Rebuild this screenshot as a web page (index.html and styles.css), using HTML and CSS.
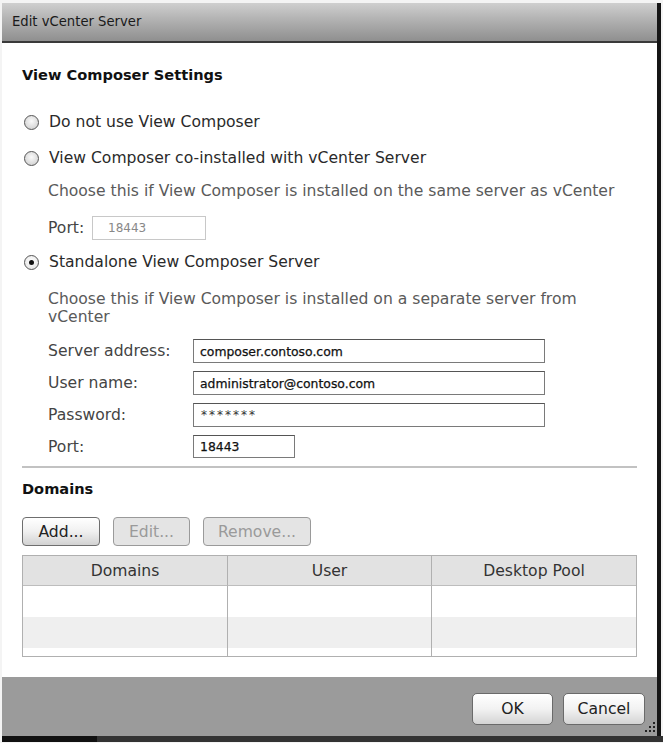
FILE: index.html
```html
<!DOCTYPE html>
<html>
<head>
<meta charset="utf-8">
<link rel="stylesheet" href="styles.css">
</head>
<body>
<div class="dialog">
  <div class="titlebar">Edit vCenter Server</div>
  <div class="content">
    <h2 class="heading first">View Composer Settings</h2>
    <div class="radio-row r1"><span class="radio"></span><span>Do not use View Composer</span></div>
    <div class="radio-row r2"><span class="radio"></span><span>View Composer co-installed with vCenter Server</span></div>
    <div class="desc d1">Choose this if View Composer is installed on the same server as vCenter</div>
    <div class="port-row"><span class="label short">Port:</span><span class="input disabled">18443</span></div>
    <div class="radio-row r3"><span class="radio checked"></span><span>Standalone View Composer Server</span></div>
    <div class="desc d2">Choose this if View Composer is installed on a separate server from vCenter</div>
    <div class="form">
      <div class="form-row"><span class="label">Server address:</span><span class="input wide">composer.contoso.com</span></div>
      <div class="form-row"><span class="label">User name:</span><span class="input wide">administrator@contoso.com</span></div>
      <div class="form-row"><span class="label">Password:</span><span class="input wide pw">*******</span></div>
      <div class="form-row"><span class="label">Port:</span><span class="input port">18443</span></div>
    </div>
    <div class="separator"></div>
    <h2 class="heading domains">Domains</h2>
    <div class="toolbar">
      <button class="btn add">Add...</button>
      <button class="btn dis edit">Edit...</button>
      <button class="btn dis remove">Remove...</button>
    </div>
    <div class="table">
      <div class="th">Domains</div><div class="th">User</div><div class="th last">Desktop Pool</div>
      <div class="td"></div><div class="td"></div><div class="td last"></div>
      <div class="td alt"></div><div class="td alt"></div><div class="td alt last"></div>
      <div class="td tail"></div><div class="td tail"></div><div class="td tail last"></div>
    </div>
  </div>
  <div class="footer">
    <button class="fbtn ok">OK</button>
    <button class="fbtn cancel">Cancel</button>
    <svg class="grip" width="12" height="12" viewBox="0 0 12 12"><rect x="9" y="1" width="2" height="2" fill="#222"/><rect x="5" y="5" width="2" height="2" fill="#222"/><rect x="9" y="5" width="2" height="2" fill="#222"/><rect x="1" y="9" width="2" height="2" fill="#222"/><rect x="5" y="9" width="2" height="2" fill="#222"/><rect x="9" y="9" width="2" height="2" fill="#222"/></svg>
  </div>
</div>
<div class="bottom-strip"><div class="bs-left"></div><div class="bs-right"></div></div>
</body>
</html>
```
FILE: styles.css
```css
html, body {
  margin: 0;
  padding: 0;
  background: #f4f4f4;
}
body {
  font-family: "DejaVu Sans", Verdana, sans-serif;
  color: #222;
  width: 663px;
  height: 743px;
  overflow: hidden;
}
.dialog {
  width: 655px;
  margin: 3px 0 0 2px;
  border-right: 4px solid #151515;
  background: #fff;
  position: relative;
}
.titlebar {
  height: 38px;
  line-height: 37px;
  padding-left: 10px;
  font-size: 13.2px;
  color: #1a1a1a;
  background: linear-gradient(#cfcfcf, #b4b4b4 40%, #8f8f8f);
  border-bottom: 2px solid #3a3a3a;
  margin-bottom: 1px;
}
.content {
  height: 633px;
  padding: 0 20px;
  box-sizing: border-box;
  display: flex;
  flex-direction: column;
}
.heading {
  margin: 0;
  font-size: 14.6px;
  font-weight: bold;
  line-height: 20px;
  height: 20px;
  color: #111;
}
.heading.first { margin-top: 21px; }
.radio-row {
  display: flex;
  align-items: center;
  height: 24px;
  font-size: 15.6px;
  color: #2a2a2a;
}
.r1 { margin-top: 25px; }
.r2 { margin-top: 12px; }
.r3 { margin-top: 10px; }
.radio {
  width: 13px;
  height: 13px;
  border: 1px solid #555;
  border-radius: 50%;
  margin-left: 2px;
  margin-right: 10px;
  background: radial-gradient(circle at 50% 40%, #fafafa, #d8d8d8 70%, #bdbdbd);
  display: flex;
  align-items: center;
  justify-content: center;
  box-sizing: content-box;
}
.radio.checked {
  background: radial-gradient(circle at 50% 40%, #ffffff, #e6e6e6 80%);
}
.radio.checked::after {
  content: "";
  width: 5px;
  height: 5px;
  border-radius: 50%;
  background: #111;
}
.desc {
  font-size: 15.6px;
  color: #5a5a5a;
  margin-left: 26px;
  line-height: 18px;
}
.d1 { margin-top: 12px; }
.d2 { margin-top: 16px; width: 560px; }
.port-row {
  display: flex;
  align-items: center;
  margin-left: 26px;
  margin-top: 16px;
  height: 24px;
}
.label {
  font-size: 15.6px;
  color: #444;
  width: 145px;
}
.label.short { width: 44px; }
.input {
  height: 24px;
  box-sizing: border-box;
  border: 1px solid #7a7a7a;
  border-top-color: #555;
  font-size: 12.4px;
  color: #111;
  padding-left: 6px;
  display: flex;
  align-items: center;
  background: #fff;
  -webkit-text-stroke: 0.25px #111;
}
.input.pw {
  color: #333;
  -webkit-text-stroke: 0;
  letter-spacing: 2px;
  font-size: 12px;
  padding-left: 7px;
}
.input.disabled {
  width: 114px;
  border: 1px solid #c8c8c8;
  color: #888;
  font-size: 12px;
  padding-left: 15px;
  -webkit-text-stroke: 0;
}
.input.wide { width: 352px; }
.input.port { width: 102px; height: 23px; }
.form {
  margin-left: 26px;
  margin-top: 13px;
  display: flex;
  flex-direction: column;
  gap: 8px;
}
.form-row {
  display: flex;
  align-items: center;
}
.separator {
  margin-top: 8px;
  height: 2px;
  background: #c2c2c2;
  width: 615px;
}
.heading.domains { margin-top: 11px; }
.toolbar {
  display: flex;
  gap: 13px;
  margin-top: 18px;
  height: 29px;
}
.btn {
  height: 29px;
  font-family: "DejaVu Sans", Verdana, sans-serif;
  font-size: 15.6px;
  border-radius: 4px;
  border: 1px solid #6e6e6e;
  background: linear-gradient(#ffffff, #f0f0f0 50%, #d2d2d2);
  color: #222;
  padding: 0;
}
.btn.add { width: 78px; }
.btn.edit { width: 77px; }
.btn.remove { width: 108px; }
.btn.dis {
  background: #e4e4e4;
  border-color: #9a9a9a;
  color: #9a9a9a;
}
.table {
  margin-top: 9px;
  width: 615px;
  display: grid;
  grid-template-columns: 205px 204px 204px;
  grid-template-rows: 30px 31px 31px 8px;
  border: 1px solid #b0b0b0;
  box-sizing: border-box;
}
.th {
  background: #e2e2e2;
  border-right: 1px solid #b0b0b0;
  border-bottom: 1px solid #bdbdbd;
  font-size: 15.6px;
  color: #333;
  display: flex;
  align-items: center;
  justify-content: center;
}
.td {
  border-right: 1px solid #b0b0b0;
  background: #fff;
}
.td.alt { background: #efefef; }
.last { border-right: none; }
.footer {
  height: 59px;
  background: #9b9b9b;
  display: flex;
  justify-content: flex-end;
  align-items: flex-start;
  gap: 10px;
  padding: 16px 12px 0 0;
  box-sizing: border-box;
  position: relative;
}
.fbtn {
  width: 81px;
  height: 32px;
  font-family: "DejaVu Sans", Verdana, sans-serif;
  font-size: 15.6px;
  color: #222;
  border: 1px solid #6a6a6a;
  border-radius: 5px;
  background: linear-gradient(#ffffff, #f2f2f2 50%, #d4d4d4);
  padding: 0;
}
.fbtn.cancel { width: 82px; }
.grip {
  position: absolute;
  right: 1px;
  bottom: 3px;
}
.bottom-strip {
  display: flex;
  height: 6px;
  margin-left: 2px;
}
.bs-left { width: 95px; background: #111; }
.bs-right { flex: 1; background: #333; }
```
